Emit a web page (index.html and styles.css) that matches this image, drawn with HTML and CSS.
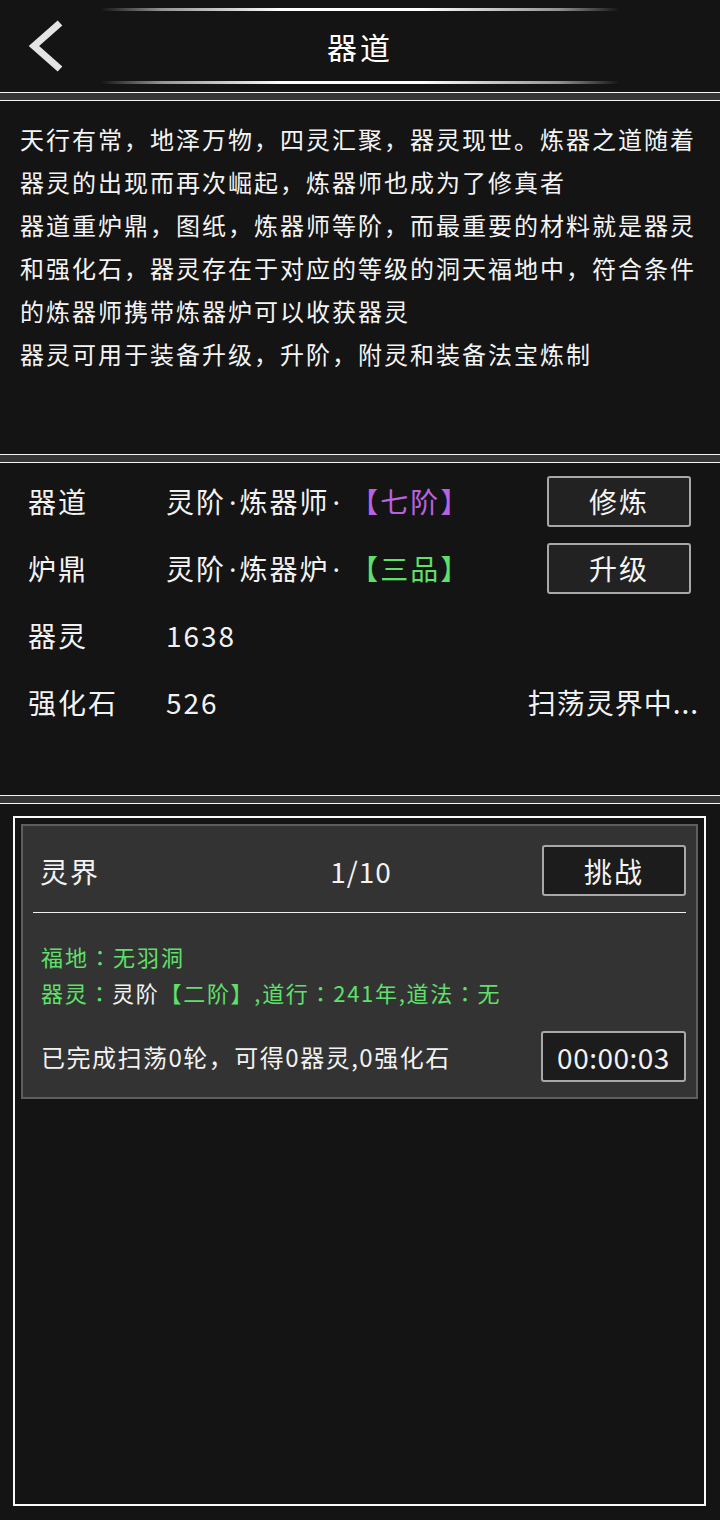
FILE: index.html
```html
<!DOCTYPE html>
<html>
<head>
    <meta charset="UTF-8">
    <title>器道</title>
    <link rel="stylesheet" href="styles.css">
</head>
<body>
    <header class="topbar">
        <div class="glow"></div>
        <div class="title-row">
            <a class="back" href="#">
                <svg width="36" height="52" viewBox="0 0 36 52">
                    <polyline points="32,3 6,26 32,49" fill="none" stroke="#e4e4e4" stroke-width="7"/>
                </svg>
            </a>
            <h1>器道</h1>
            <span></span>
        </div>
        <div class="glow"></div>
    </header>

    <div class="sep"></div>

    <section class="intro">
        <p>天行有常，地泽万物，四灵汇聚，器灵现世。炼器之道随着器灵的出现而再次崛起，炼器师也成为了修真者</p>
        <p>器道重炉鼎，图纸，炼器师等阶，而最重要的材料就是器灵和强化石，器灵存在于对应的等级的洞天福地中，符合条件的炼器师携带炼器炉可以收获器灵</p>
        <p>器灵可用于装备升级，升阶，附灵和装备法宝炼制</p>
    </section>

    <div class="sep"></div>

    <section class="stats">
        <div class="stat-row">
            <span class="stat-label">器道</span>
            <span class="stat-value">灵阶<span class="dot">·</span>炼器师<span class="dot">· </span><span class="purple">【七阶】</span></span>
            <button type="button" class="btn">修炼</button>
        </div>
        <div class="stat-row">
            <span class="stat-label">炉鼎</span>
            <span class="stat-value">灵阶<span class="dot">·</span>炼器炉<span class="dot">· </span><span class="green">【三品】</span></span>
            <button type="button" class="btn">升级</button>
        </div>
        <div class="stat-row">
            <span class="stat-label">器灵</span>
            <span class="stat-value">1638</span>
        </div>
        <div class="stat-row">
            <span class="stat-label">强化石</span>
            <span class="stat-value">526</span>
            <span class="stat-status">扫荡灵界中...</span>
        </div>
    </section>

    <div class="sep"></div>

    <section class="realm-wrap">
        <div class="realm-frame">
            <div class="realm-card">
                <div class="realm-head">
                    <span class="realm-name">灵界</span>
                    <span class="realm-count">1/10</span>
                    <button type="button" class="btn btn-small">挑战</button>
                </div>
                <div class="realm-line"></div>
                <div class="realm-info">
                    <p>福地<span class="colon">：</span>无羽洞</p>
                    <p class="info-tight">器灵<span class="colon">：</span><span class="white">灵阶</span>【二阶】,道行<span class="colon">：</span>241年,道法<span class="colon">：</span>无</p>
                </div>
                <div class="realm-foot">
                    <span class="realm-progress">已完成扫荡0轮，可得0器灵,0强化石</span>
                    <span class="timer">00:00:03</span>
                </div>
            </div>
        </div>
    </section>
</body>
</html>
```

FILE: styles.css
```css
/* Page */
html, body {
    margin: 0;
    padding: 0;
}

body {
    width: 720px;
    min-height: 1520px;
    background-color: #141414;
    color: #f2f2f2;
    font-family: "Noto Sans CJK SC", "Noto Sans", sans-serif;
    letter-spacing: 2px;
    display: flex;
    flex-direction: column;
}

p {
    margin: 0;
}

/* Top bar */
.topbar {
    height: 92px;
    box-sizing: border-box;
    padding-top: 8px;
    display: flex;
    flex-direction: column;
    align-items: center;
}

.glow {
    width: 520px;
    height: 3px;
    background: linear-gradient(90deg, rgba(255,255,255,0) 0%, rgba(255,255,255,0.55) 12%, #fff 35%, #fff 62%, rgba(255,255,255,0.55) 88%, rgba(255,255,255,0) 100%);
    filter: blur(0.6px);
}

.title-row {
    width: 100%;
    height: 70px;
    display: grid;
    grid-template-columns: 100px 1fr 100px;
    align-items: center;
}

.back {
    display: flex;
    padding-left: 28px;
}

.title-row h1 {
    margin: 0;
    text-align: center;
    font-size: 30px;
    font-weight: 400;
    color: #fff;
    letter-spacing: 3px;
}

/* Separator */
.sep {
    height: 7px;
    background-color: #353535;
    border-top: 1px solid #f4f4f4;
    border-bottom: 1px solid #f4f4f4;
}

/* Intro text */
.intro {
    height: 353px;
    box-sizing: border-box;
    padding: 16px 20px 0 20px;
    font-size: 24px;
    line-height: 43px;
    color: #f4f4f4;
}

/* Stats */
.stats {
    height: 332px;
    box-sizing: border-box;
    padding-top: 13px;
    display: flex;
    flex-direction: column;
    gap: 17px;
}

.stat-row {
    height: 50px;
    display: flex;
    align-items: center;
    padding: 0 21px 0 28px;
    font-size: 28px;
    line-height: 1;
    white-space: pre;
}

.stat-label {
    width: 138px;
    flex-shrink: 0;
}

.stat-value {
    flex: 1;
}

.dot {
    font-family: "Noto Sans", sans-serif;
    letter-spacing: 0;
    margin: 0 3px;
}

.stat-status {
    letter-spacing: 1px;
}

.purple {
    color: #b962e0;
}

.green {
    color: #5fe06a;
}

.white {
    color: #f2f2f2;
}

.colon {
    font-family: "Noto Sans CJK TC", sans-serif;
}

.btn {
    width: 144px;
    height: 51px;
    margin-right: 8px;
    box-sizing: border-box;
    background-color: #222;
    border: 2px solid #a8a8a8;
    border-radius: 3px;
    color: #f4f4f4;
    font-family: "Noto Sans CJK SC", "Noto Sans", sans-serif;
    font-size: 28px;
    letter-spacing: 2px;
    padding: 0;
    cursor: pointer;
}

/* Realm */
.realm-wrap {
    flex: 1;
    display: flex;
    padding: 12px 14px 14px 13px;
}

.realm-frame {
    flex: 1;
    border: 2px solid #fafafa;
    padding: 6px;
}

.realm-card {
    background-color: #333;
    border: 2px solid #5e5e5e;
}

.realm-head {
    height: 50px;
    display: grid;
    grid-template-columns: 1fr auto 1fr;
    align-items: center;
    padding: 19px 10px 1px 17px;
    font-size: 28px;
    line-height: 1;
}

.realm-count {
    letter-spacing: 1px;
    margin-left: -4px;
}

.btn-small {
    justify-self: end;
    margin-right: 0;
    background-color: #1c1c1c;
}

.realm-line {
    height: 1px;
    background-color: #f0f0f0;
    margin: 16px 10px 0 10px;
}

.realm-info {
    padding: 25px 0 0 18px;
    font-size: 22px;
    line-height: 36px;
    color: #5fe06a;
    letter-spacing: 2px;
}

.info-tight {
    letter-spacing: 1.7px;
}

.realm-foot {
    display: flex;
    align-items: center;
    justify-content: space-between;
    margin-top: 21px;
    padding: 0 10px 15px 18px;
}

.realm-progress {
    font-size: 24px;
    letter-spacing: 1.5px;
}

.timer {
    width: 145px;
    height: 51px;
    box-sizing: border-box;
    display: flex;
    align-items: center;
    justify-content: center;
    background-color: #1c1c1c;
    border: 2px solid #a8a8a8;
    border-radius: 3px;
    font-size: 28px;
    letter-spacing: 0.5px;
}
```
